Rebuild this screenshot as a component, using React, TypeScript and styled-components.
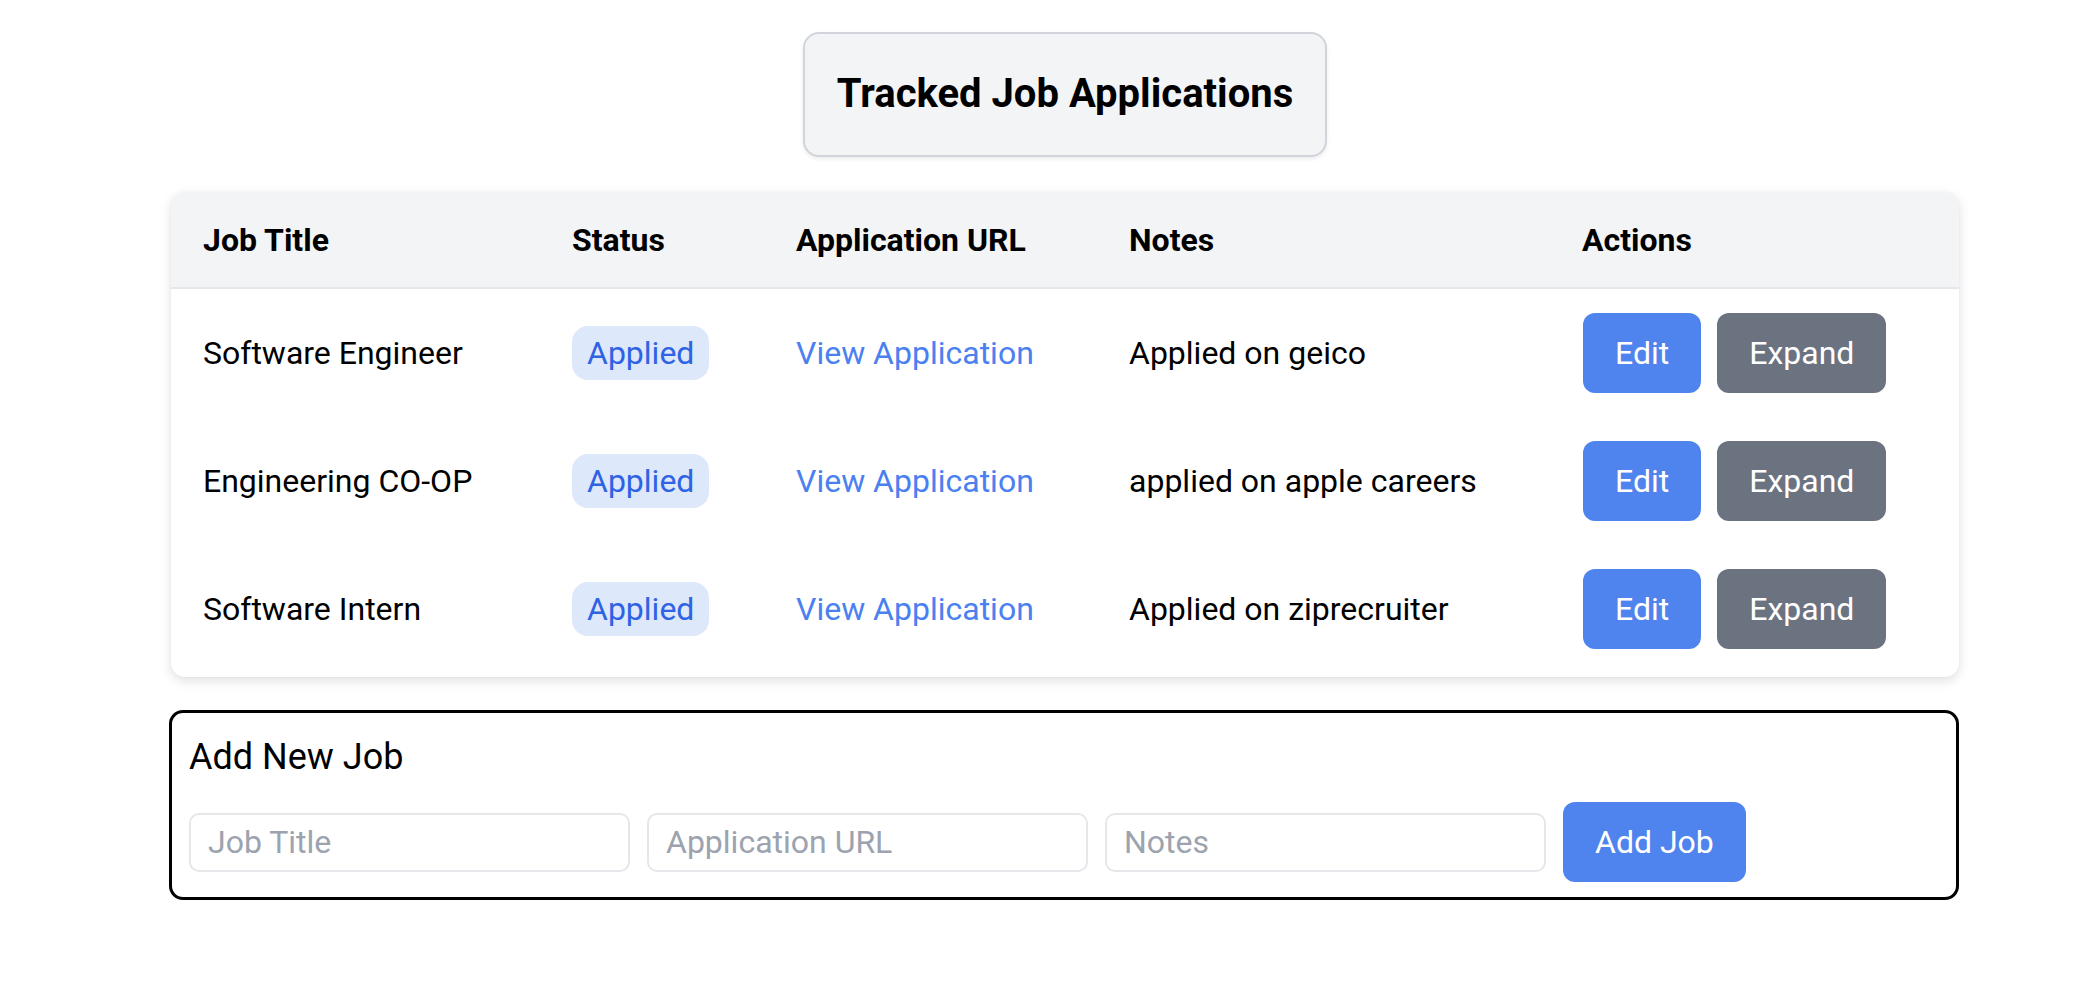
import React, { useState } from "react";
import styled, { createGlobalStyle } from "styled-components";

type Job = {
  id: number;
  title: string;
  status: string;
  url: string;
  notes: string;
};

const initialJobs: Job[] = [
  { id: 1, title: "Software Engineer", status: "Applied", url: "#", notes: "Applied on geico" },
  { id: 2, title: "Engineering CO-OP", status: "Applied", url: "#", notes: "applied on apple careers" },
  { id: 3, title: "Software Intern", status: "Applied", url: "#", notes: "Applied on ziprecruiter" },
];

function App() {
  const [jobs, setJobs] = useState<Job[]>(initialJobs);
  const [title, setTitle] = useState("");
  const [url, setUrl] = useState("");
  const [notes, setNotes] = useState("");

  // 새 항목 추가
  const addJob = (e: React.FormEvent<HTMLFormElement>) => {
    e.preventDefault();
    if (!title) return;
    setJobs((prev) => [...prev, { id: Date.now(), title, status: "Applied", url, notes }]);
    setTitle("");
    setUrl("");
    setNotes("");
  };

  return (
    <Page>
      <GlobalStyle />
      <TitleWrap>
        <TitleBox>Tracked Job Applications</TitleBox>
      </TitleWrap>

      <Card>
        <HeadRow>
          <HeadCell>Job Title</HeadCell>
          <HeadCell>Status</HeadCell>
          <HeadCell>Application URL</HeadCell>
          <HeadCell>Notes</HeadCell>
          <HeadCell>Actions</HeadCell>
        </HeadRow>
        {jobs.map((job) => (
          <BodyRow key={job.id}>
            <Cell>{job.title}</Cell>
            <Cell>
              <Badge>{job.status}</Badge>
            </Cell>
            <Cell>
              <Link href={job.url}>View Application</Link>
            </Cell>
            <Cell>{job.notes}</Cell>
            <Actions>
              <Button $variant="primary">Edit</Button>
              <Button $variant="secondary">Expand</Button>
            </Actions>
          </BodyRow>
        ))}
      </Card>

      <AddForm onSubmit={addJob}>
        <FormTitle>Add New Job</FormTitle>
        <FormRow>
          <Input placeholder="Job Title" value={title} onChange={(e) => setTitle(e.target.value)} />
          <Input placeholder="Application URL" value={url} onChange={(e) => setUrl(e.target.value)} />
          <Input placeholder="Notes" value={notes} onChange={(e) => setNotes(e.target.value)} />
          <Button type="submit" $variant="primary">
            Add Job
          </Button>
        </FormRow>
      </AddForm>
    </Page>
  );
}

export default App;

const GlobalStyle = createGlobalStyle`
  body {
    margin: 0;
    background: #ffffff;
    font-family: Roboto, "Liberation Sans", sans-serif;
    color: #000;
  }
`;

const Page = styled.div`
  width: 1788px;
  margin-left: 171px;
  padding-top: 32px;
`;

const TitleWrap = styled.div`
  display: flex;
  justify-content: center;
  margin-bottom: 35px;
`;

const TitleBox = styled.h1`
  margin: 0;
  padding: 30px 32px 31px;
  font-size: 40px;
  line-height: 60px;
  font-weight: 700;
  background: #f3f4f6;
  border: 2px solid #d1d5db;
  border-radius: 16px;
  box-shadow: 0 2px 4px rgba(0, 0, 0, 0.08);
`;

const Card = styled.div`
  background: #fff;
  border-radius: 14px;
  box-shadow: 0 4px 12px rgba(0, 0, 0, 0.12), 0 0 2px rgba(0, 0, 0, 0.06);
  overflow: hidden;
  padding-bottom: 4px;
`;

const columns = "369px 224px 333px 453px 1fr";

const HeadRow = styled.div`
  display: grid;
  grid-template-columns: ${columns};
  background: #f3f4f6;
  border-bottom: 2px solid #e5e7eb;
`;

const HeadCell = styled.div`
  padding: 24px 32px 23px;
  font-size: 32px;
  line-height: 48px;
  font-weight: 700;
`;

const BodyRow = styled.div`
  display: grid;
  grid-template-columns: ${columns};
  align-items: center;
`;

const Cell = styled.div`
  padding: 24px 32px;
  font-size: 32px;
  line-height: 48px;
`;

const Actions = styled.div`
  display: flex;
  gap: 16px;
  padding: 24px 32px 24px 33px;
`;

const Badge = styled.span`
  display: inline-block;
  padding: 8px 15px;
  line-height: 38px;
  font-size: 32px;
  color: #2f63e4;
  background: #dde8fb;
  border-radius: 16px;
`;

const Link = styled.a`
  color: #4a80f0;
  text-decoration: none;
  font-size: 32px;
`;

const Button = styled.button<{ $variant: "primary" | "secondary" }>`
  height: 80px;
  padding: 0 32px;
  border: none;
  border-radius: 12px;
  font-family: Roboto, "Liberation Sans", sans-serif;
  font-size: 32px;
  color: #fff;
  cursor: pointer;
  background: ${(p) => (p.$variant === "primary" ? "#4f83ee" : "#6b7280")};
`;

const AddForm = styled.form`
  margin: 33px 0 0 -2px;
  border: 3px solid #000;
  border-radius: 14px;
  padding: 16px 17px 15px;
`;

const FormTitle = styled.h2`
  margin: 0 0 17px;
  font-size: 36px;
  line-height: 56px;
  font-weight: 400;
`;

const FormRow = styled.div`
  display: flex;
  align-items: center;
  gap: 17px;
`;

const Input = styled.input`
  box-sizing: border-box;
  width: 441px;
  height: 59px;
  padding: 0 17px;
  border: 2px solid #e5e7eb;
  border-radius: 10px;
  font-family: Roboto, "Liberation Sans", sans-serif;
  font-size: 32px;
  outline: none;

  &::placeholder {
    color: #9ca3af;
  }
`;
